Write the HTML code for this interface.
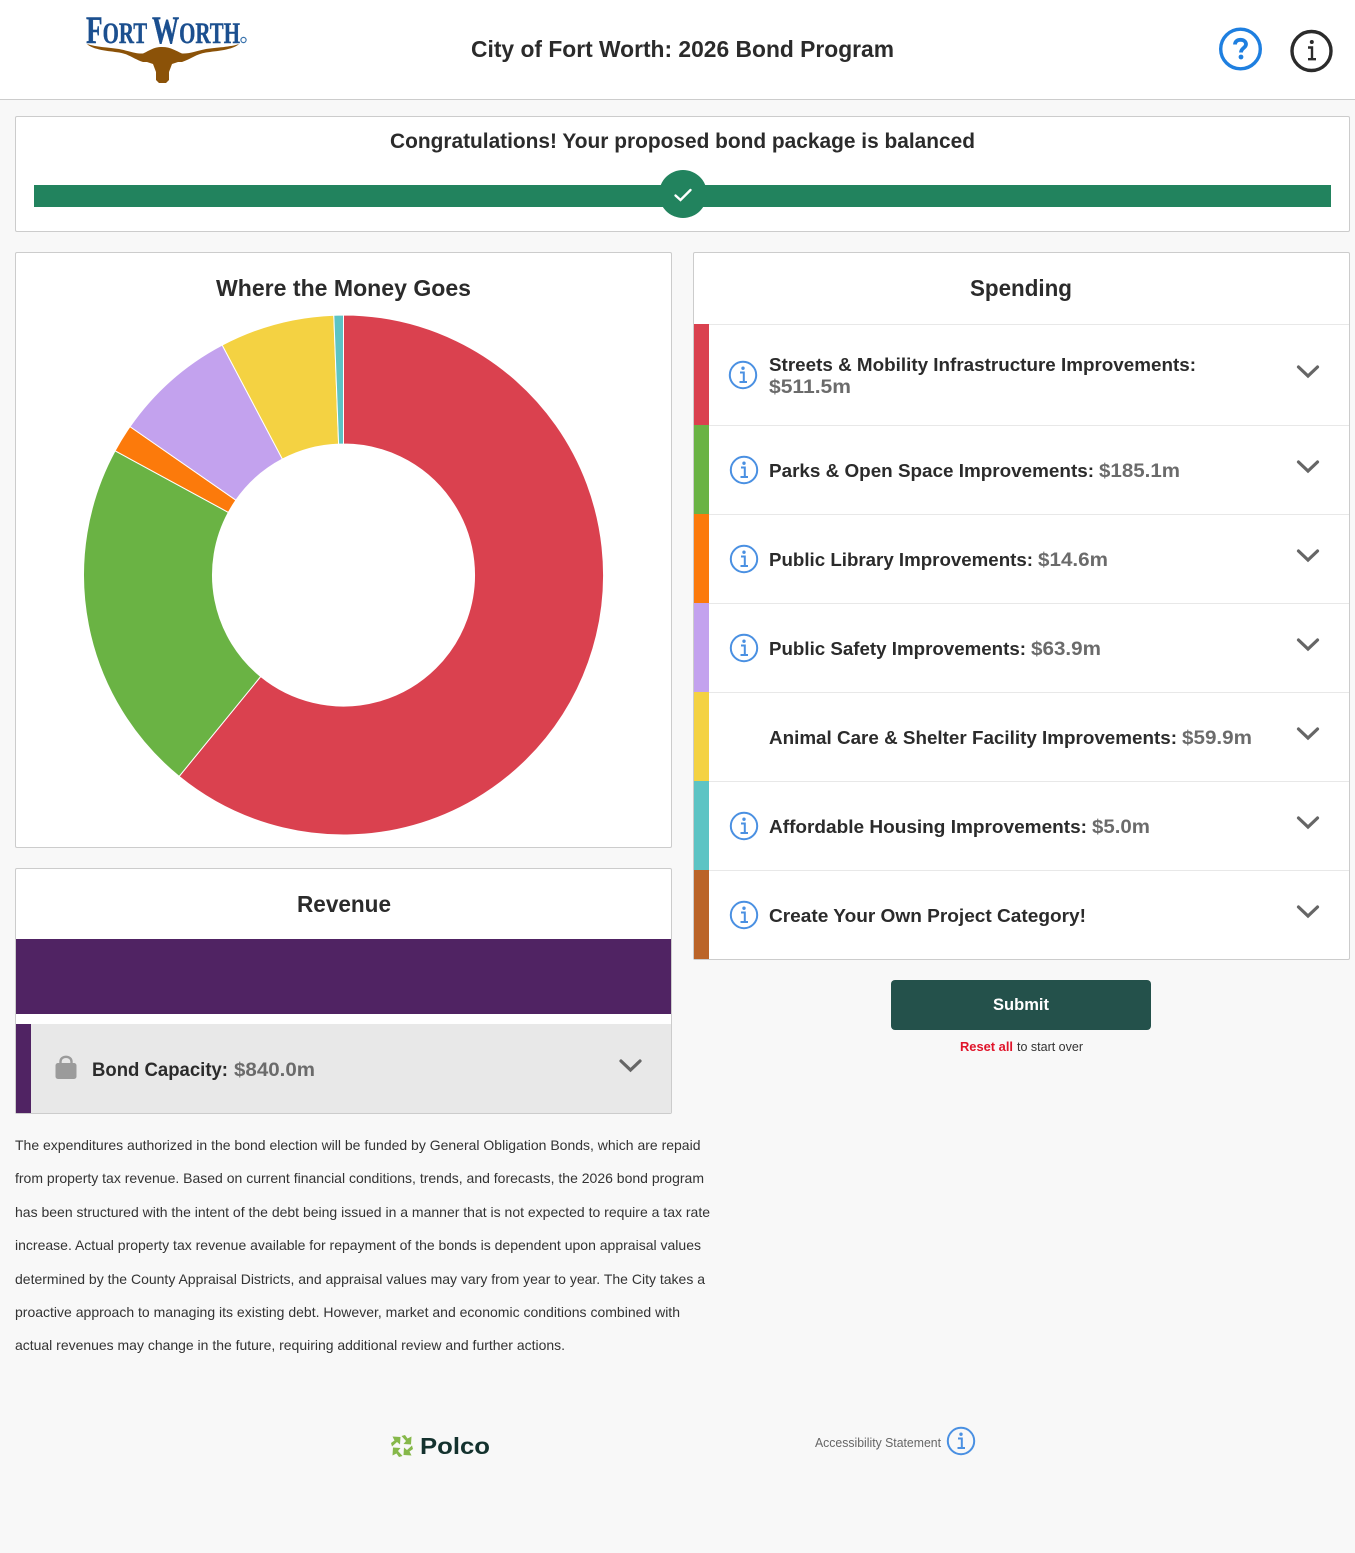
<!DOCTYPE html>
<html lang="en">
<head>
<meta charset="utf-8">
<title>City of Fort Worth: 2026 Bond Program</title>
<style>
html,body{margin:0;padding:0;width:1355px;height:1553px;overflow:hidden;background:#f8f8f8}
.b{position:absolute;box-sizing:border-box}
.panel{background:#fff;border:1px solid #ccc;border-radius:2px}
svg.o{position:absolute;left:0;top:0}
text{font-family:"Liberation Sans",Arial,sans-serif}
.h{font-weight:700;fill:#2b2b2b}
.v{font-weight:700;fill:#6b6b6b}
.p{font-size:14px;fill:#333}
</style>
</head>
<body>
<div class="b" style="left:0;top:0;width:1355px;height:100px;background:#fff;border-bottom:1px solid #ccc"></div>
<div class="b panel" style="left:15px;top:116px;width:1335px;height:116px"></div>
<div class="b" style="left:34px;top:185px;width:1297px;height:22px;background:#22835e"></div>
<div class="b panel" style="left:15px;top:252px;width:657px;height:596px"></div>
<div class="b panel" style="left:15px;top:868px;width:657px;height:246px"></div>
<div class="b" style="left:16px;top:939px;width:655px;height:75px;background:#502363"></div>
<div class="b" style="left:16px;top:1024px;width:655px;height:89px;background:#e8e8e8"></div>
<div class="b" style="left:16px;top:1024px;width:15px;height:89px;background:#502363"></div>
<div class="b panel" style="left:693px;top:252px;width:657px;height:708px"></div>
<div class="b" style="left:694px;top:324px;width:655px;height:1px;background:#e8e8e8"></div>
<div class="b" style="left:694px;top:425px;width:655px;height:1px;background:#e8e8e8"></div>
<div class="b" style="left:694px;top:514px;width:655px;height:1px;background:#e8e8e8"></div>
<div class="b" style="left:694px;top:603px;width:655px;height:1px;background:#e8e8e8"></div>
<div class="b" style="left:694px;top:692px;width:655px;height:1px;background:#e8e8e8"></div>
<div class="b" style="left:694px;top:781px;width:655px;height:1px;background:#e8e8e8"></div>
<div class="b" style="left:694px;top:870px;width:655px;height:1px;background:#e8e8e8"></div>
<div class="b" style="left:694px;top:324px;width:15px;height:101px;background:#da414f"></div>
<div class="b" style="left:694px;top:425px;width:15px;height:89px;background:#6ab344"></div>
<div class="b" style="left:694px;top:514px;width:15px;height:89px;background:#fc7a0b"></div>
<div class="b" style="left:694px;top:603px;width:15px;height:89px;background:#c3a2ee"></div>
<div class="b" style="left:694px;top:692px;width:15px;height:89px;background:#f4d242"></div>
<div class="b" style="left:694px;top:781px;width:15px;height:89px;background:#5dc4c4"></div>
<div class="b" style="left:694px;top:870px;width:15px;height:89px;background:#bb6428"></div>
<div class="b" style="left:891px;top:980px;width:260px;height:50px;background:#24514b;border-radius:4px"></div>

<svg class="o" width="1355" height="1553" viewBox="0 0 1355 1553" xmlns="http://www.w3.org/2000/svg">
<defs>
<g id="inf">
<circle r="13.2" fill="none" stroke="#4a90e2" stroke-width="2"/>
<circle cx="0" cy="-6.8" r="1.7" fill="#4a90e2"/>
<path d="M-3-2.5H.8V6.5M-3.5 7H4" fill="none" stroke="#4a90e2" stroke-width="2"/>
</g>
<path id="chev" d="M-9.5-4 0 5 9.5-4" fill="none" stroke="#666" stroke-width="3.2" stroke-linecap="round" stroke-linejoin="miter"/>
<path id="pw" d="M-.5-10 3-11 5.5-7.5 9.5-9.5 9-1.5 1.5-2 4-5Z" fill="#86b84a"/>
</defs>

<!-- Logo -->
<text x="86" y="43" textLength="154" lengthAdjust="spacingAndGlyphs" style="font-family:'Liberation Serif',serif;font-weight:700" fill="#1b4f8f" stroke="#1b4f8f" stroke-width=".4" font-size="39">F<tspan font-size="30">ORT </tspan>W<tspan font-size="30">ORTH</tspan></text>
<circle cx="243.5" cy="40" r="2.6" fill="none" stroke="#3b74ad" stroke-width="1.2"/>
<path transform="translate(1 0)" d="M86 44C95 47 108 47.5 118 49 128 51 135 54 142 53.5 148 51 152 47 161 47 170 47 175 51 181 53.5 188 54 195 51 205 49 215 47.5 230 47 238 44 232 50 215 51 205 52.5 195 54 190 59 181 62L177 62 171 64 168 72V80L165 83H158L155 80V72L152 64 146 62 142 62C133 59 128 54 118 52.5 108 51 92 50 86 44Z" fill="#8b5208"/>

<text class="h" x="471" y="57" font-size="23" textLength="423" lengthAdjust="spacingAndGlyphs">City of Fort Worth: 2026 Bond Program</text>

<circle cx="1240.5" cy="49" r="19.8" fill="none" stroke="#1e7fe0" stroke-width="3.4"/>
<path d="M1235 44.5C1235 41.5 1237.5 39.8 1240.5 39.8 1243.5 39.8 1246 41.5 1246 44.3 1246 48 1241 48 1241 52.5" fill="none" stroke="#1e7fe0" stroke-width="3.8"/>
<circle cx="1241" cy="57" r="2.4" fill="#1e7fe0"/>

<circle cx="1311.5" cy="51" r="19.5" fill="none" stroke="#2b2b2b" stroke-width="3.4"/>
<circle cx="1311.8" cy="42" r="2" fill="#2b2b2b"/>
<path d="M1308 47.5H1312V59M1308 59.2H1316" fill="none" stroke="#2b2b2b" stroke-width="2.4"/>

<!-- Balance -->
<text class="h" x="390" y="148" font-size="21" textLength="585" lengthAdjust="spacingAndGlyphs">Congratulations! Your proposed bond package is balanced</text>
<circle cx="683" cy="194" r="24" fill="#22835e"/>
<path d="M675.5 195.5 680.5 200 690.5 190" fill="none" stroke="#fff" stroke-width="2.4" stroke-linecap="round"/>

<!-- Donut -->
<text class="h" x="216" y="296" font-size="23" textLength="255" lengthAdjust="spacingAndGlyphs">Where the Money Goes</text>
<g stroke="#fff" stroke-width="1">
<path d="M343.5 315A260 260 0 1 1 179.1 776.4L260.7 676.5A131 131 0 1 0 343.5 444Z" fill="#da414f"/>
<path d="M179.1 776.4A260 260 0 0 1 115.1 450.8L228.4 512.4A131 131 0 0 0 260.7 676.5Z" fill="#6ab344"/>
<path d="M115.1 450.8A260 260 0 0 1 130 426.6L235.9 500.2A131 131 0 0 0 228.4 512.4Z" fill="#fc7a0b"/>
<path d="M130 426.6A260 260 0 0 1 222.2 345.1L282.4 459.1A131 131 0 0 0 235.9 500.2Z" fill="#c3a2ee"/>
<path d="M222.2 345.1A260 260 0 0 1 333.8 315.2L338.6 444.1A131 131 0 0 0 282.4 459.1Z" fill="#f4d242"/>
<path d="M333.8 315.2A260 260 0 0 1 343.5 315V444A131 131 0 0 0 338.6 444.1Z" fill="#5dc4c4"/>
</g>
<circle cx="343.5" cy="575" r="130.5" fill="none" stroke="#da414f" stroke-width="0" />

<!-- Revenue -->
<text class="h" x="297" y="912" font-size="23" textLength="94" lengthAdjust="spacingAndGlyphs">Revenue</text>
<path d="M60.5 1064V1061.5C60.5 1058.5 63 1056.8 66 1056.8 69 1056.8 71.5 1058.5 71.5 1061.5V1064" fill="none" stroke="#9b9b9b" stroke-width="2.4"/>
<rect x="55.5" y="1063" width="21" height="16" rx="2.5" fill="#9b9b9b"/>
<text class="h" x="92" y="1076" font-size="19" textLength="136" lengthAdjust="spacingAndGlyphs">Bond Capacity:</text>
<text class="v" x="234" y="1076" font-size="19" textLength="81" lengthAdjust="spacingAndGlyphs">$840.0m</text>
<use href="#chev" x="630.5" y="1065"/>

<!-- Spending -->
<text class="h" x="970" y="296" font-size="23" textLength="102" lengthAdjust="spacingAndGlyphs">Spending</text>

<use href="#inf" x="743" y="375"/>
<text class="h" x="769" y="371" font-size="18.5" textLength="427" lengthAdjust="spacingAndGlyphs">Streets &amp; Mobility Infrastructure Improvements:</text>
<text class="v" x="769" y="393" font-size="19" textLength="82" lengthAdjust="spacingAndGlyphs">$511.5m</text>
<use href="#chev" x="1308" y="371"/>

<use href="#inf" x="744" y="470"/>
<text class="h" x="769" y="477" font-size="18.5" textLength="325" lengthAdjust="spacingAndGlyphs">Parks &amp; Open Space Improvements:</text>
<text class="v" x="1099" y="477" font-size="19" textLength="81" lengthAdjust="spacingAndGlyphs">$185.1m</text>
<use href="#chev" x="1308" y="466"/>

<use href="#inf" x="744" y="559"/>
<text class="h" x="769" y="566" font-size="18.5" textLength="264" lengthAdjust="spacingAndGlyphs">Public Library Improvements:</text>
<text class="v" x="1038" y="566" font-size="19" textLength="70" lengthAdjust="spacingAndGlyphs">$14.6m</text>
<use href="#chev" x="1308" y="555"/>

<use href="#inf" x="744" y="648"/>
<text class="h" x="769" y="655" font-size="18.5" textLength="257" lengthAdjust="spacingAndGlyphs">Public Safety Improvements:</text>
<text class="v" x="1031" y="655" font-size="19" textLength="70" lengthAdjust="spacingAndGlyphs">$63.9m</text>
<use href="#chev" x="1308" y="644"/>

<text class="h" x="769" y="744" font-size="18.5" textLength="408" lengthAdjust="spacingAndGlyphs">Animal Care &amp; Shelter Facility Improvements:</text>
<text class="v" x="1182" y="744" font-size="19" textLength="70" lengthAdjust="spacingAndGlyphs">$59.9m</text>
<use href="#chev" x="1308" y="733"/>

<use href="#inf" x="744" y="826"/>
<text class="h" x="769" y="833" font-size="18.5" textLength="318" lengthAdjust="spacingAndGlyphs">Affordable Housing Improvements:</text>
<text class="v" x="1092" y="833" font-size="19" textLength="58" lengthAdjust="spacingAndGlyphs">$5.0m</text>
<use href="#chev" x="1308" y="822"/>

<use href="#inf" x="744" y="915"/>
<text class="h" x="769" y="922" font-size="18.5" textLength="317" lengthAdjust="spacingAndGlyphs">Create Your Own Project Category!</text>
<use href="#chev" x="1308" y="911"/>

<!-- Submit -->
<text x="993" y="1010" font-size="17" font-weight="700" fill="#fff" textLength="56" lengthAdjust="spacingAndGlyphs">Submit</text>
<text x="960" y="1051" font-size="13" font-weight="700" fill="#e0142a" textLength="53" lengthAdjust="spacingAndGlyphs">Reset all</text>
<text x="1017" y="1051" font-size="12.5" fill="#333" textLength="66" lengthAdjust="spacingAndGlyphs">to start over</text>

<!-- Paragraph -->
<text class="p" x="15" y="1150" textLength="685.5" lengthAdjust="spacingAndGlyphs">The expenditures authorized in the bond election will be funded by General Obligation Bonds, which are repaid</text>
<text class="p" x="15" y="1183" textLength="689" lengthAdjust="spacingAndGlyphs">from property tax revenue. Based on current financial conditions, trends, and forecasts, the 2026 bond program</text>
<text class="p" x="15" y="1217" textLength="695" lengthAdjust="spacingAndGlyphs">has been structured with the intent of the debt being issued in a manner that is not expected to require a tax rate</text>
<text class="p" x="15" y="1250" textLength="686" lengthAdjust="spacingAndGlyphs">increase. Actual property tax revenue available for repayment of the bonds is dependent upon appraisal values</text>
<text class="p" x="15" y="1284" textLength="690" lengthAdjust="spacingAndGlyphs">determined by the County Appraisal Districts, and appraisal values may vary from year to year. The City takes a</text>
<text class="p" x="15" y="1317" textLength="665" lengthAdjust="spacingAndGlyphs">proactive approach to managing its existing debt. However, market and economic conditions combined with</text>
<text class="p" x="15" y="1350" textLength="550" lengthAdjust="spacingAndGlyphs">actual revenues may change in the future, requiring additional review and further actions.</text>

<!-- Footer -->
<g transform="translate(402 1446)">
<use href="#pw"/>
<use href="#pw" transform="rotate(90)"/>
<use href="#pw" transform="rotate(180)"/>
<use href="#pw" transform="rotate(270)"/>
</g>
<text x="420" y="1454" font-size="23" font-weight="700" fill="#14322e" textLength="70" lengthAdjust="spacingAndGlyphs">Polco</text>
<text x="815" y="1447" font-size="13" fill="#666" textLength="126" lengthAdjust="spacingAndGlyphs">Accessibility Statement</text>
<use href="#inf" x="961" y="1441"/>
</svg>
</body>
</html>
